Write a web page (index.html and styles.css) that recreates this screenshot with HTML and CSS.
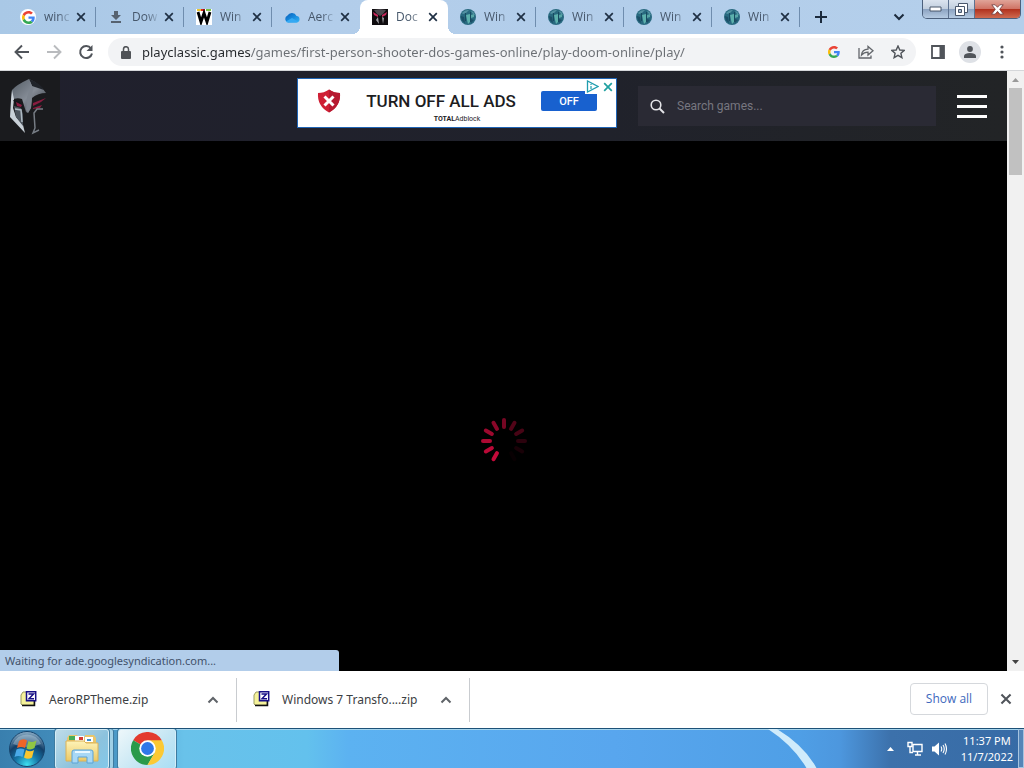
FILE: index.html
```html
<!DOCTYPE html>
<html lang="en">
<head>
<meta charset="utf-8">
<title>Doom Online</title>
<meta name="viewport" content="width=device-width, initial-scale=1">
<link rel="stylesheet" href="styles.css">
</head>
<body>
<svg class="defs" aria-hidden="true">
  <defs>
    <radialGradient id="orb" cx="50%" cy="95%" r="95%"><stop offset="0" stop-color="#3fe0f0"/><stop offset=".35" stop-color="#1677a8"/><stop offset=".65" stop-color="#123f69"/><stop offset="1" stop-color="#8fb0c8"/></radialGradient>
    <linearGradient id="steel" x1="0" y1="0" x2="1" y2="1"><stop offset="0" stop-color="#525b64"/><stop offset=".5" stop-color="#858c96"/><stop offset="1" stop-color="#2c3037"/></linearGradient>
    <linearGradient id="cloud" x1="0" y1="0" x2="1" y2="1"><stop offset="0" stop-color="#0b5cb8"/><stop offset=".5" stop-color="#1589dc"/><stop offset="1" stop-color="#35b4f5"/></linearGradient>
    <linearGradient id="folder" x1="0" y1="0" x2="0" y2="1"><stop offset="0" stop-color="#fdf3b8"/><stop offset="1" stop-color="#ecc966"/></linearGradient>
  </defs>
  <symbol id="google" viewBox="0 0 48 48">
    <path fill="#ea4335" d="M24 9.500c3.540 0 6.710 1.220 9.210 3.600l6.850-6.850C35.900 2.380 30.470 0 24 0 14.620 0 6.510 5.380 2.560 13.220l7.980 6.190C12.430 13.720 17.740 9.500 24 9.500z"/>
    <path fill="#4285f4" d="M46.980 24.550c0-1.570-.15-3.090-.38-4.550H24v9.020h12.940c-.58 2.960-2.260 5.480-4.780 7.180l7.730 6c4.510-4.180 7.090-10.360 7.090-17.650z"/>
    <path fill="#fbbc05" d="M10.530 28.590c-.48-1.450-.76-2.990-.76-4.590s.27-3.140.76-4.590l-7.980-6.190C.92 16.460 0 20.120 0 24s.92 7.540 2.560 10.780z"/>
    <path fill="#34a853" d="M24 48c6.480 0 11.930-2.130 15.890-5.810l-7.730-6c-2.150 1.450-4.920 2.300-8.160 2.300-6.260 0-11.570-4.220-13.470-9.910l-7.980 6.190C6.510 42.620 14.620 48 24 48z"/>
  </symbol>
  <symbol id="cross" viewBox="0 0 10 10"><path d="M1.200 1.200 8.800 8.800M8.800 1.200 1.200 8.800" fill="none" stroke="currentColor" stroke-width="1.700"/></symbol>
  <symbol id="globe" viewBox="0 0 16 16">
    <circle cx="8" cy="8" r="8" fill="#28697f"/>
    <path d="M2 4Q5 .5 9 1L6 4 3 5zM11 1.500q3.500 1.500 4 5L12 4z" fill="#5392a2"/>
    <path d="M6 6l4-1v8l-2 2-1-4z" fill="#5cb0ac"/>
    <path d="M11 6l3-1v3l-3 1z" fill="#57a6a6"/>
    <path d="M1 7l3 1 1 6Q1 12 1 7zM11 10l3 1-3 3z" fill="#1c4f68"/>
    <path d="M5.500 4v8M10.500 3v10" stroke="#174b60"/>
  </symbol>
  <symbol id="caret" viewBox="0 0 12 8"><path d="M1.500 6.500 6 2l4.500 4.500" fill="none" stroke="currentColor" stroke-width="2"/></symbol>
  <symbol id="zip" viewBox="0 0 17 16">
    <path d="M1 13V4l2-3h5v2h6v10l-1 1H2z" fill="#f5f29a" stroke="#9a9b62"/>
    <path d="M2 14.500h12.500V10" fill="none" stroke="#111" stroke-width="1.500"/>
    <path d="M6.500.8h9.200v9H6.500z" fill="#fff" stroke="#170f86" stroke-width="1.500"/>
    <path d="M8.500 3h5L9 7.800h5" fill="none" stroke="#170f86" stroke-width="1.500"/>
  </symbol>
</svg>

<div class="window">
  <header class="tabstrip">
    <nav class="tabs" aria-label="Tabs">
      <div class="tab"><span class="favicon round"><svg width="13" height="13"><use href="#google"/></svg></span><span class="tab-title">winc</span><button class="tab-close" aria-label="Close tab"><svg width="10" height="10"><use href="#cross"/></svg></button></div>
      <div class="tab"><span class="favicon"><svg width="12" height="14" viewBox="0 0 12 14"><path d="M4 1h4v4h3L6 10 1 5h3zM1 11h10v2H1z" fill="#566270"/></svg></span><span class="tab-title">Dow</span><button class="tab-close" aria-label="Close tab"><svg width="10" height="10"><use href="#cross"/></svg></button></div>
      <div class="tab"><span class="favicon"><svg width="16" height="16" viewBox="0 0 16 16"><path fill="#fff" d="M0 0h16v16H0z"/><path d="M1 1h4" stroke="#e8c531" stroke-width="2"/><path d="M5 1h4" stroke="#d22" stroke-width="2"/><path d="M10 1h5" stroke="#7cc142" stroke-width="2"/><path d="M2 3l3 10 3-9 3 9 3-10" fill="none" stroke="#000" stroke-width="2.800"/></svg></span><span class="tab-title">Win</span><button class="tab-close" aria-label="Close tab"><svg width="10" height="10"><use href="#cross"/></svg></button></div>
      <div class="tab no-line"><span class="favicon"><svg width="16" height="11" viewBox="0 0 16 11"><path d="M4 10.500a3.700 3.700 0 0 1-.5-7A5 5 0 0 1 12.500 4a3.300 3.300 0 0 1 .5 6.500z" fill="url(#cloud)"/><path d="M2 9.500 8 6l6 3.500q-.5 1-2 1H4q-1.500 0-2-1z" fill="#35a9f3"/></svg></span><span class="tab-title">Aerc</span><button class="tab-close" aria-label="Close tab"><svg width="10" height="10"><use href="#cross"/></svg></button></div>
      <div class="tab active no-line"><span class="favicon"><svg width="16" height="16" viewBox="0 0 16 16"><path fill="#0e0b0e" d="M0 0h16v16H0z"/><path d="M2 1l6-1 6 1-3 4-3 2-3-2z" fill="#4d4a50"/><path d="M1 3l5 3v2L2 6zM15 3l-5 3v2l4-2z" fill="#c9265a"/><path d="M6 8l1 7-3-4zM10 8l2 1-1 6z" fill="#a5a5aa"/></svg></span><span class="tab-title">Doc</span><button class="tab-close" aria-label="Close tab"><svg width="10" height="10"><use href="#cross"/></svg></button></div>
      <div class="tab"><span class="favicon"><svg width="16" height="16"><use href="#globe"/></svg></span><span class="tab-title">Win</span><button class="tab-close" aria-label="Close tab"><svg width="10" height="10"><use href="#cross"/></svg></button></div>
      <div class="tab"><span class="favicon"><svg width="16" height="16"><use href="#globe"/></svg></span><span class="tab-title">Win</span><button class="tab-close" aria-label="Close tab"><svg width="10" height="10"><use href="#cross"/></svg></button></div>
      <div class="tab"><span class="favicon"><svg width="16" height="16"><use href="#globe"/></svg></span><span class="tab-title">Win</span><button class="tab-close" aria-label="Close tab"><svg width="10" height="10"><use href="#cross"/></svg></button></div>
      <div class="tab"><span class="favicon"><svg width="16" height="16"><use href="#globe"/></svg></span><span class="tab-title">Win</span><button class="tab-close" aria-label="Close tab"><svg width="10" height="10"><use href="#cross"/></svg></button></div>
      <button class="new-tab" aria-label="New tab"><svg width="12" height="12" viewBox="0 0 12 12"><path d="M6 0v12M0 6h12" stroke="#1c2b3d" stroke-width="2"/></svg></button>
    </nav>
    <button class="tab-search" aria-label="Search tabs"><svg class="flip" width="12" height="8"><use href="#caret"/></svg></button>
    <div class="caption">
      <button class="cap" aria-label="Minimize"><svg width="13" height="6" viewBox="0 0 13 6"><path d="M1 1h11v4H1z" fill="#fff" stroke="#49566b"/></svg></button>
      <button class="cap" aria-label="Restore"><svg width="13" height="13" viewBox="0 0 13 13"><path d="M3.500.5h9v9h-9z" fill="#fff" stroke="#49566b"/><path d="M.5 3.500h9v9h-9z" fill="#fff" stroke="#49566b"/><path d="M3.500 6.500h3v3h-3z" fill="#a9bcd3" stroke="#49566b"/></svg></button>
      <button class="cap cap-close" aria-label="Close"><svg width="13" height="11" viewBox="0 0 13 11"><path d="M.8.800h3.400l2.300 2.500L8.800.800h3.400L8.700 5.300l3.700 4.900H8.900L6.500 7.400l-2.400 2.800H.6l3.700-4.900z" fill="#fff" stroke="#6b3a3c" stroke-width=".8"/></svg></button>
    </div>
  </header>

  <div class="toolbar">
    <button class="nav-btn" aria-label="Back"><svg width="16" height="16" viewBox="0 0 16 16"><path d="M15 8H2M8 1.500 1.500 8 8 14.500" fill="none" stroke="#50545a" stroke-width="1.900"/></svg></button>
    <button class="nav-btn" aria-label="Forward"><svg width="16" height="16" viewBox="0 0 16 16"><path d="M1 8h13M8 1.500 14.500 8 8 14.500" fill="none" stroke="#b9bbbe" stroke-width="1.900"/></svg></button>
    <button class="nav-btn" aria-label="Reload"><svg width="16" height="16" viewBox="0 0 16 16"><path d="M13 4.500A6 6 0 1 0 14 9.500" fill="none" stroke="#50545a" stroke-width="2"/><path d="M14.500 1v6h-6z" fill="#50545a"/></svg></button>
    <div class="omnibox">
      <svg width="10" height="13" viewBox="0 0 10 13"><path d="M1 5h8q1 0 1 1v6q0 1-1 1H1q-1 0-1-1V6q0-1 1-1z" fill="#505357"/><path d="M2.500 6V3.200a2.500 2.500 0 0 1 5 0V6" fill="none" stroke="#505357" stroke-width="1.500"/></svg>
      <input class="url" type="text" aria-label="Address" value="playclassic.games/games/first-person-shooter-dos-games-online/play-doom-online/play/">
      <button class="omni-btn" aria-label="Search with Google"><svg width="12" height="12"><use href="#google"/></svg></button>
      <button class="omni-btn" aria-label="Share"><svg width="16" height="14" viewBox="0 0 16 14"><path d="M1 3v10h12v-2.500" fill="none" stroke="#63666b" stroke-width="1.300"/><path d="M3.500 10Q4 4.500 10 4.200V1.500L15 5.800l-5 4.200V7.200Q6 7.200 3.500 10z" fill="none" stroke="#63666b" stroke-width="1.300"/></svg></button>
      <button class="omni-btn" aria-label="Bookmark"><svg width="14" height="14" viewBox="0 0 14 14"><path d="M7 1l1.800 4 4.400.4-3.300 2.900 1 4.400L7 10.400l-3.900 2.300 1-4.400L.8 5.400 5.200 5z" fill="none" stroke="#50545a" stroke-width="1.400"/></svg></button>
    </div>
    <button class="tool-btn" aria-label="Side panel"><svg width="14" height="14" viewBox="0 0 14 14"><path d="M1 1h12v12H1z" fill="none" stroke="#50545a" stroke-width="1.800"/><path d="M8.500 1H13v12H8.500z" fill="#50545a"/></svg></button>
    <button class="tool-btn profile" aria-label="Profile"><svg width="12" height="12" viewBox="0 0 12 12"><circle cx="6" cy="3" r="2.900" fill="#50545a"/><path d="M0 12V9.500Q1 7 6 7t6 2.500V12z" fill="#50545a"/></svg></button>
    <button class="tool-btn" aria-label="Menu"><svg width="4" height="14" viewBox="0 0 4 14"><g fill="#50545a"><circle cx="2" cy="2" r="1.600"/><circle cx="2" cy="7" r="1.600"/><circle cx="2" cy="12" r="1.600"/></g></svg></button>
  </div>

  <div class="viewport">
    <div class="page">
      <header class="site-header">
        <a class="logo" href="#" aria-label="Play Classic Games"><svg width="40" height="60" viewBox="0 0 40 60">
          <path d="M21 3Q8 9 4 14L3 24q6-3 11-1l4 13 2 1 3-5 1-10q6-5 14-5Q32 8 21 3z" fill="url(#steel)"/>
          <path d="M21 3q11 4 15 11l-12-4z" fill="#20242a"/>
          <path d="M21 3q2 5 1 9l-3 9-1 13 2 3 3-5 1-11 1-9z" fill="#7d848e"/>
          <path d="M4 14 3 24 2 41l15 16-2-8-7-8-3-9 1-9z" fill="#c9d1d8"/>
          <path d="M6 30l7 2 2 6v12l-7-9z" fill="#4c545d"/>
          <path d="M7 33l6 1 1 12" fill="none" stroke="#aebac3" stroke-width="1.500"/>
          <path d="M5 24l6 1 4 6-7-2z" fill="#14151b"/><path d="M8 26l6 3-1 2-4-1z" fill="#8a1c40"/>
          <path d="M25 27l13-5-5 4-8 4zM25 32l9-3-2 3-7 1z" fill="#8a1c40"/>
          <path d="M35 33h-6l-3 4 1 15-2 5 6-3" fill="none" stroke="#767c84" stroke-width="1.500"/>
        </svg></a>
        <aside class="ad">
          <svg class="shield" width="24" height="24" viewBox="0 0 24 24"><path d="M12 .5q5 3.500 11 3.500 1 13-11 19.500Q0 17 1 4q6 0 11-3.500z" fill="#cf2035"/><path d="M12 .5q5 3.500 11 3.500 1 13-11 19.500z" fill="#b71930"/><path d="M7.500 7.500l9 9M16.500 7.500l-9 9" stroke="#fff" stroke-width="3"/></svg>
          <div class="ad-copy"><strong class="ad-title">TURN OFF ALL ADS</strong><span class="ad-brand"><b>TOTAL</b>Adblock</span></div>
          <a class="ad-cta" href="#">OFF</a>
          <div class="ad-choices"><svg width="13" height="13" viewBox="0 0 13 13"><path d="M1.500 1v11L12 6.500z" fill="#fff" stroke="#1f9dae" stroke-width="1.300"/><path d="M5 6v3M5 4v1" stroke="#1f9dae" stroke-width="1.200"/></svg><button class="ad-close" aria-label="Close ad"><svg width="10" height="10"><use href="#cross"/></svg></button></div>
        </aside>
        <label class="search"><svg width="15" height="15" viewBox="0 0 15 15"><circle cx="6" cy="6" r="4.800" fill="none" stroke="#e4e4e8" stroke-width="1.600"/><path d="M9.500 9.500 14 14" stroke="#e4e4e8" stroke-width="2"/></svg><input type="search" placeholder="Search games..." aria-label="Search games"></label>
        <button class="burger" aria-label="Open menu"><span></span><span></span><span></span></button>
      </header>
      <main class="stage">
        <svg class="spinner" width="48" height="48" viewBox="-24 -24 48 48" role="img" aria-label="Loading">
          <g fill="none" stroke="#c40a3a" stroke-width="4" stroke-linecap="round">
            <path d="M0-14v-7" opacity=".6"/><path d="M0-14v-7" transform="rotate(30)" opacity=".42"/><path d="M0-14v-7" transform="rotate(60)" opacity=".36"/><path d="M0-14v-7" transform="rotate(90)" opacity=".22"/><path d="M0-14v-7" transform="rotate(120)" opacity=".12"/><path d="M0-14v-7" transform="rotate(150)" opacity=".04"/><path d="M0-14v-7" transform="rotate(210)"/><path d="M0-14v-7" transform="rotate(240)" opacity=".95"/><path d="M0-14v-7" transform="rotate(270)" opacity=".88"/><path d="M0-14v-7" transform="rotate(300)" opacity=".8"/><path d="M0-14v-7" transform="rotate(330)" opacity=".7"/>
          </g>
        </svg>
      </main>
    </div>
    <div class="scrollbar" aria-hidden="true">
      <svg width="7" height="4" viewBox="0 0 7 4"><path d="M0 4 3.500 0 7 4z" fill="#9a9a9a"/></svg>
      <div class="thumb"></div>
      <svg class="scroll-end" width="7" height="4" viewBox="0 0 7 4"><path d="M0 0 3.500 4 7 0z" fill="#444"/></svg>
    </div>
    <div class="status">Waiting for ade.googlesyndication.com...</div>
  </div>

  <section class="downloads" aria-label="Downloads">
    <div class="download"><svg width="17" height="16"><use href="#zip"/></svg><a href="#">AeroRPTheme.zip</a><button aria-label="Options"><svg width="12" height="8"><use href="#caret"/></svg></button></div>
    <div class="download"><svg width="17" height="16"><use href="#zip"/></svg><a href="#">Windows 7 Transfo....zip</a><button aria-label="Options"><svg width="12" height="8"><use href="#caret"/></svg></button></div>
    <button class="show-all">Show all</button>
    <button class="shelf-close" aria-label="Close downloads bar"><svg width="12" height="12"><use href="#cross"/></svg></button>
  </section>
</div>

<footer class="taskbar">
  <svg class="streak" width="70" height="40" viewBox="0 0 70 40" aria-hidden="true"><path d="M8 0h9q28 17 40 40h-10Q34 17 8 0z" fill="#d6effc" opacity=".95"/></svg>
  <button class="start" aria-label="Start"><svg width="38" height="38" viewBox="0 0 38 38">
    <circle cx="19" cy="19" r="17.500" fill="url(#orb)" stroke="#17466f"/>
    <path d="M5 14a15 15 0 0 1 28 0q-14 6-28 0z" fill="#d8e8f0" opacity=".35"/>
    <path d="M11 11q4-3 8-.5L17 18q-4-2-8 0z" fill="#ee6528"/>
    <path d="M20.500 11q4 2 8-.5L26.500 18q-4 2.500-8 .5z" fill="#91c644"/>
    <path d="M8.500 19.500q4-2 8 0L14.500 27q-4-2-8 0z" fill="#4aa9e8"/>
    <path d="M18 20q4 2.500 8 0L24 27.500q-4 2.500-8 0z" fill="#fbc62e"/>
  </svg></button>
  <button class="task stacked" aria-label="Windows Explorer"><svg width="34" height="32" viewBox="0 0 34 32">
    <path d="M2 6l2-3h8l2 2h6V3h9l2 3v23H2z" fill="#e9c66b"/>
    <path d="M4 4h6v4H4z" fill="#47ad58"/><path d="M10 4h9v5h-9zM20 5h8v5h-8z" fill="#fff"/><path d="M14 5h4v3h-4z" fill="#d43b32"/><path d="M22 7h4v2h-4z" fill="#3b90cf"/>
    <path d="M1 9h18l2 2h12v18H1z" fill="url(#folder)" stroke="#dcb257"/>
    <path d="M7 31V20q0-2 2-2h17q2 0 2 2v11h-6v-6h-9v6z" fill="#a8d8f5" stroke="#5ba3d6"/>
    <path d="M10 20h15" stroke="#e9f8ff" stroke-width="2"/>
  </svg></button>
  <button class="task current" aria-label="Google Chrome"><svg width="33" height="33" viewBox="0 0 48 48">
    <path d="M24 24 3.200 12A24 24 0 0 1 44.800 12z" fill="#e33b2e"/>
    <path d="M24 24 3.200 12A24 24 0 0 0 24 48l10.400-18z" fill="#2a9a4a"/>
    <path d="M24 12h20.800A24 24 0 0 1 24 48l10.400-18z" fill="#fcc934"/>
    <circle cx="24" cy="24" r="12" fill="#fff"/><circle cx="24" cy="24" r="9.300" fill="#2f78e8"/>
  </svg></button>
  <div class="tray">
    <svg width="7" height="4" viewBox="0 0 7 4"><path d="M0 4 3.500 0 7 4z" fill="#fff"/></svg>
    <svg width="16" height="16" viewBox="0 0 16 16"><path d="M6 3.500h9v7H6zM8 14h6M10.500 11v3" fill="#3c71ab" stroke="#fff" stroke-width="1.400"/><path d="M1 1.500h4v4H1zM3 6v5.500h3" fill="none" stroke="#fff" stroke-width="1.400"/></svg>
    <svg width="16" height="14" viewBox="0 0 16 14"><path d="M1 4.500h2.500L8 .5v13L3.500 9.500H1z" fill="#fff"/><path d="M10 4.500q1.500 2.500 0 5M12 3q2.500 4 0 8M14 1.500q3 5.500 0 11" fill="none" stroke="#fff" stroke-width="1.100"/></svg>
    <time class="clock" datetime="2022-11-07T23:37"><span>11:37 PM</span><span>11/7/2022</span></time>
    <button class="show-desktop" aria-label="Show desktop"></button>
  </div>
</footer>
</body>
</html>
```
FILE: styles.css
```css
* { box-sizing: border-box; }

body {
  margin: 0;
  min-height: 100vh;
  display: flex;
  flex-direction: column;
  background: #000;
  font: 12px/16px "Noto Sans", "Open Sans", sans-serif;
  color: #3c4043;
}

button {
  margin: 0;
  padding: 0;
  border: 0;
  background: none;
  color: inherit;
  font: inherit;
  display: flex;
  align-items: center;
  justify-content: center;
  flex: none;
}

a { color: inherit; text-decoration: none; }
svg { display: block; flex: none; }
.defs { position: absolute; width: 0; height: 0; }
.flip { transform: scaleY(-1); }

.window {
  flex: 1;
  display: flex;
  flex-direction: column;
}

/* Tabs */
.tabstrip {
  display: flex;
  height: 34px;
  padding: 0 3px 0 8px;
  background: linear-gradient(90deg, #a9c8e6, #b2cdea 30%, #b4cfeb);
}
.tabs { flex: 1; display: flex; min-width: 0; }
.tab {
  flex: 0 1 88px;
  min-width: 0;
  display: flex;
  align-items: center;
  padding: 0 10px 0 12px;
  color: #46576b;
  font-family: "Open Sans", "Noto Sans", sans-serif;
  background: linear-gradient(#6f8dae, #6f8dae) right center / 1px 20px no-repeat;
}
.tab.no-line { background: none; }
.tab.active {
  position: relative;
  background: #fff;
  border-radius: 8px 8px 0 0;
}
.tab.active::before,
.tab.active::after {
  content: "";
  position: absolute;
  bottom: 0;
  width: 8px;
  height: 8px;
}
.tab.active::before { left: -8px; background: radial-gradient(circle at 0 0, transparent 8px, #fff 8px); }
.tab.active::after { right: -8px; background: radial-gradient(circle at 100% 0, transparent 8px, #fff 8px); }
.favicon {
  width: 16px;
  height: 16px;
  flex: none;
  display: flex;
  align-items: center;
  justify-content: center;
}
.favicon.round { background: #fff; border-radius: 50%; }
.tab-title {
  flex: 1;
  min-width: 0;
  margin: 0 4px 0 8px;
  white-space: nowrap;
  -webkit-mask-image: linear-gradient(90deg, #000 50%, transparent);
  mask-image: linear-gradient(90deg, #000 50%, transparent);
}
.tab-close { color: #1f3044; }
.new-tab { width: 42px; }
.tab-search { width: 40px; margin-right: 3px; color: #1c2b3d; }
.caption {
  display: flex;
  height: 19px;
  border: 1px solid #4c607c;
  border-top: 0;
  border-radius: 0 0 5px 5px;
  overflow: hidden;
}
.cap {
  width: 26px;
  border-right: 1px solid #5d7290;
  background: linear-gradient(#dbe4ef, #c0cddd 50%, #8ba2c0 50%, #b5cae2);
}
.cap-close {
  width: 45px;
  border-right: 0;
  background: linear-gradient(#e0a498, #cf7263 50%, #b0301c 50%, #cf6a50);
}

/* Toolbar */
.toolbar {
  display: flex;
  align-items: center;
  height: 37px;
  padding: 0 10px 0 6px;
  background: #fff;
  border-bottom: 1px solid #d5d7da;
}
.nav-btn { width: 32px; height: 32px; }
.omnibox {
  flex: 1;
  min-width: 0;
  height: 28px;
  margin: 0 10px 0 6px;
  padding: 0 2px 0 13px;
  display: flex;
  align-items: center;
  border-radius: 14px;
  background: #f2f3f5;
}
.url {
  flex: 1;
  min-width: 0;
  margin-left: 11px;
  padding: 0;
  border: 0;
  outline: 0;
  font: 13px/20px "Noto Sans", "Open Sans", sans-serif;
  color: transparent;
  background: linear-gradient(90deg, #25282c 109px, #6b6f74 109px);
  -webkit-background-clip: text;
  background-clip: text;
}
.omni-btn { width: 32px; height: 28px; }
.tool-btn { width: 24px; height: 24px; margin-right: 9px; }
.tool-btn:last-child { margin-right: 0; }
.profile { width: 22px; height: 22px; border-radius: 50%; background: #dee1e6; }

/* Web page */
.viewport {
  flex: 1;
  display: flex;
  position: relative;
  background: #000;
}
.page { flex: 1; min-width: 0; display: flex; flex-direction: column; }
.site-header {
  display: flex;
  align-items: center;
  height: 70px;
  padding-right: 20px;
  background: linear-gradient(90deg, #20202d, #20222b 60%, #222426);
}
.logo {
  width: 60px;
  height: 70px;
  padding-right: 4px;
  display: flex;
  align-items: center;
  justify-content: center;
  background: #1a1b1e;
  margin-right: auto;
}
.ad {
  position: relative;
  width: 320px;
  height: 50px;
  margin-bottom: 6px;
  padding: 0 19px;
  display: flex;
  align-items: center;
  justify-content: space-between;
  background: #fff;
  border: 1px solid #2065b5;
  font-family: Roboto, sans-serif;
  color: #1d1d1f;
}
.shield { margin-bottom: 4px; }
.ad-copy { display: flex; flex-direction: column; align-items: center; padding-top: 8px; }
.ad-title { font-size: 17px; line-height: 24px; font-weight: 500; }
.ad-brand { margin-left: 32px; font-size: 7px; line-height: 12px; }
.ad-cta {
  width: 56px;
  height: 20px;
  margin-bottom: 4px;
  border-radius: 2px;
  background: #1861cf;
  color: #fff;
  font-size: 11px;
  line-height: 22px;
  font-weight: 500;
  text-align: center;
}
.ad-choices {
  position: absolute;
  top: 0;
  right: 0;
  display: flex;
  align-items: center;
  gap: 4px;
  padding: 1px 3px 1px 1px;
  color: #1fa0a0;
  background: #fff;
}
.search {
  flex: 0 1 298px;
  height: 40px;
  margin: 0 21px;
  padding: 0 12px;
  display: flex;
  align-items: center;
  gap: 12px;
  background: #2a2a34;
}
.search input {
  flex: 1;
  min-width: 0;
  padding: 0;
  border: 0;
  outline: 0;
  background: none;
  color: #ddd;
  font: 12px/20px Roboto, sans-serif;
}
.search input::placeholder { color: #777780; opacity: 1; }
.burger { width: 30px; flex-direction: column; gap: 7px; }
.burger span { width: 30px; height: 3px; background: #fff; }
.stage {
  flex: 1;
  display: flex;
  align-items: center;
  justify-content: center;
  padding-top: 70px;
}
.scrollbar {
  width: 17px;
  padding: 7px 0;
  display: flex;
  flex-direction: column;
  align-items: center;
  background: #f1f1f1;
}
.thumb { width: 13px; height: 87px; margin-top: 6px; background: #c1c1c1; }
.scroll-end { margin-top: auto; }
.status {
  position: absolute;
  left: 0;
  bottom: 0;
  width: 339px;
  height: 21px;
  padding-left: 5px;
  border-top-right-radius: 3px;
  background: #b2cdea;
  color: #42526a;
  font-size: 11px;
  line-height: 21px;
}

/* Download shelf */
.downloads {
  display: flex;
  align-items: center;
  height: 57px;
  padding-right: 12px;
  background: #fff;
}
.download {
  flex: 0 1 233px;
  height: 44px;
  padding: 0 17px 0 16px;
  display: flex;
  align-items: center;
  border-right: 1px solid #c9ccd0;
  white-space: nowrap;
}
.download:first-child { flex-basis: 237px; padding-left: 20px; }
.download > svg { margin-bottom: 2px; }
.download a { flex: 1; margin-left: 12px; }
.download button { color: #5f6368; }
.show-all {
  width: 78px;
  height: 32px;
  margin: 0 12px 2px auto;
  border: 1px solid #d5d8dc;
  border-radius: 4px;
  color: #3d68bd;
  font-family: "Open Sans", "Noto Sans", sans-serif;
  font-weight: 500;
}
.shelf-close { margin-bottom: 2px; color: #50545a; }

/* Taskbar */
.taskbar {
  position: relative;
  display: flex;
  height: 40px;
  padding-left: 8px;
  border-top: 1px solid #1d5177;
  background: linear-gradient(90deg, #397fae, #4a98c6 11%, #69c2ea 18%, #63c1ed 30%, #5cb2f1 34%, #58a6ee 60%, #4f9fe6 78%, #4d97de 82%, #3c71ab 87%, #376ba6);
  box-shadow: inset 0 1px #a5d5ee;
  overflow: hidden;
}
.streak { position: absolute; right: 194px; top: 0; }
.start { width: 38px; margin-right: 9px; }
.task {
  height: 40px;
  border: 1px solid #d4edf7;
  border-radius: 3px;
  box-shadow: 0 0 0 1px #3e7ba0;
}
.task svg { margin-bottom: 2px; }
.stacked {
  width: 54px;
  margin-right: 9px;
  background: linear-gradient(135deg, #bfdce9, #8cc2dd 60%, #83c8ea);
  box-shadow: 0 0 0 1px #3e7ba0, 4px 0 0 #9fd0e6, 5px 0 0 #3e7ba0;
}
.current { width: 58px; background: linear-gradient(135deg, #edf7fa, #c3e5f3 60%, #a9def5); }
.tray {
  margin-left: auto;
  display: flex;
  align-items: center;
  gap: 8px;
  color: #fff;
}
.tray > svg:first-child { margin-right: 5px; }
.clock {
  display: flex;
  flex-direction: column;
  align-items: center;
  margin-left: 6px;
  font-size: 11px;
}
.show-desktop {
  align-self: stretch;
  width: 6px;
  margin-left: -3px;
  border: 1px solid #a6c4e0;
  background: #5685b7;
}
```
